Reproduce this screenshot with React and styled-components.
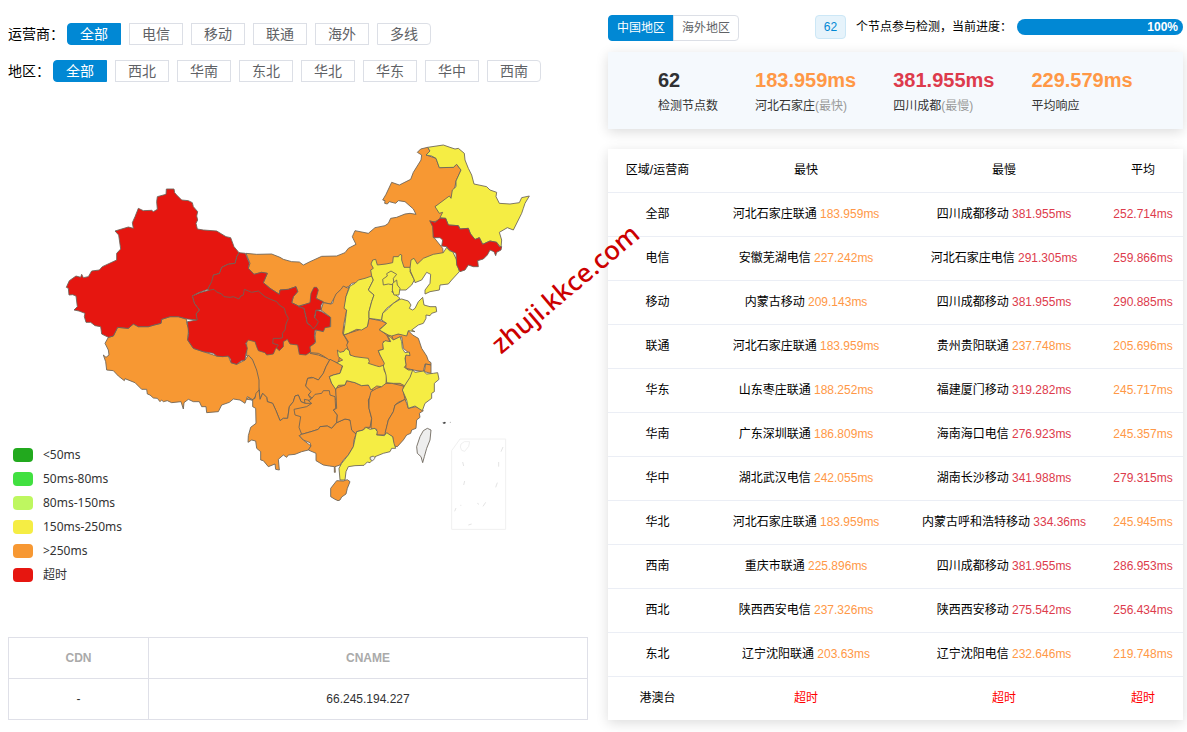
import { useState } from 'react'
import styled, { createGlobalStyle } from 'styled-components'

const RED = '#e61610'
const ORANGE = '#f79833'
const YELLOW = '#f5ed44'
const GREY = '#eeeeee'

const carriers = ['全部', '电信', '移动', '联通', '海外', '多线']
const areas = ['全部', '西北', '华南', '东北', '华北', '华东', '华中', '西南']

const legend = [
	{ color: '#22a91e', text: '<50ms' },
	{ color: '#41e040', text: '50ms-80ms' },
	{ color: '#bef760', text: '80ms-150ms' },
	{ color: YELLOW, text: '150ms-250ms' },
	{ color: ORANGE, text: '>250ms' },
	{ color: RED, text: '超时' },
]

const summary = [
	{ value: '62', name: '检测节点数' },
	{ value: '183.959ms', name: '河北石家庄', note: '(最快)', level: 'warn' },
	{ value: '381.955ms', name: '四川成都', note: '(最慢)', level: 'slow' },
	{ value: '229.579ms', name: '平均响应', level: 'warn' },
]

const results = [
	['全部', '河北石家庄联通', 183.959, '四川成都移动', 381.955, 252.714],
	['电信', '安徽芜湖电信', 227.242, '河北石家庄电信', 291.305, 259.866],
	['移动', '内蒙古移动', 209.143, '四川成都移动', 381.955, 290.885],
	['联通', '河北石家庄联通', 183.959, '贵州贵阳联通', 237.748, 205.696],
	['华东', '山东枣庄联通', 188.252, '福建厦门移动', 319.282, 245.717],
	['华南', '广东深圳联通', 186.809, '海南海口电信', 276.923, 245.357],
	['华中', '湖北武汉电信', 242.055, '湖南长沙移动', 341.988, 279.315],
	['华北', '河北石家庄联通', 183.959, '内蒙古呼和浩特移动', 334.36, 245.945],
	['西南', '重庆市联通', 225.896, '四川成都移动', 381.955, 286.953],
	['西北', '陕西西安电信', 237.326, '陕西西安移动', 275.542, 256.434],
	['东北', '辽宁沈阳联通', 203.63, '辽宁沈阳电信', 232.646, 219.748],
	['港澳台', '', null, '', null, null],
]

// Each sheet has its own origin, provinces later in a sheet lie over earlier ones
const sheets = [
	{
		at: [0, 0],
		shapes: [
			['内蒙古', ORANGE, '738,760 770,763 815,762 840,772 850,778 875,785 898,786 910,795 930,785 965,769 1010,768 1035,758 1045,745 1068,733 1059,715 1057,710 1065,692 1105,700 1125,683 1155,677 1165,670 1172,655 1190,652 1215,642 1230,640 1248,643 1240,627 1215,605 1195,602 1187,610 1168,605 1162,612 1154,610 1155,602 1148,600 1158,583 1175,547 1198,555 1232,538 1240,517 1263,480 1265,465 1252,457 1262,447 1283,442 1290,453 1278,465 1308,475 1318,503 1360,502 1370,493 1383,510 1368,543 1365,560 1353,595 1305,620 1335,635 1335,660 1300,665 1300,710 1328,745 1330,760 1240,830 1120,840 1055,850 1045,860 1023,868 1002,895 992,912 970,908 952,897 930,910 895,918 875,908 880,890 893,875 888,860 865,868 840,870 838,883 810,865 790,848 802,820 785,817 762,823 745,805 750,790'],
		],
	},
	{
		at: [720, 1020],
		shapes: [
			['四川', ORANGE, '20,48 35,55 48,90 52,120 57,150 60,178 68,160 80,172 82,185 98,190 108,212 120,242 130,235 143,235 148,200 160,185 165,168 175,165 183,185 195,190 193,178 217,183 205,165 215,155 197,138 203,115 215,112 235,120 250,100 258,80 270,58 235,45 210,40 180,0 60,-20 20,0'],
		],
	},
	{
		at: [180, 540],
		shapes: [
			['西藏', ORANGE, '145,472 160,468 173,442 205,445 220,432 235,440 265,440 303,430 305,418 330,410 355,410 380,418 380,430 386,445 383,480 400,505 430,515 470,528 505,528 513,548 530,553 555,540 565,525 578,540 590,570 597,600 597,650 585,650 580,660 562,650 555,670 540,660 520,657 508,667 485,675 475,695 440,698 438,680 425,680 418,665 400,665 385,658 372,668 370,687 363,665 335,668 322,662 310,665 305,660 300,665 292,655 280,654 270,645 262,642 260,628 245,628 225,608 210,602 195,596 193,602 175,588 160,572 140,570 137,545 130,525 138,532 147,525 145,510 135,490'],
		],
	},
	{
		at: [0, 0],
		shapes: [
			['甘肃', RED, '717,758 736,760 748,790 745,805 762,823 785,817 802,820 790,848 810,865 838,883 840,870 865,868 888,860 893,875 880,890 875,908 895,918 912,925 922,970 940,982 948,930 965,935 992,952 990,982 975,985 970,995 945,990 943,1008 946,1025 940,1035 930,1040 932,1055 918,1065 898,1063 893,1035 870,1032 862,1018 850,1025 850,1040 838,1052 825,1040 623,868 640,825 658,820 665,802 685,792 705,790 710,770'],
			['青海', RED, '577,888 600,878 630,870 642,868 650,876 665,882 672,890 690,892 700,890 717,897 722,888 730,885 733,868 755,877 775,873 795,890 812,898 830,905 838,915 853,925 857,940 865,955 858,972 855,990 847,1000 848,1013 840,1015 820,1015 818,1030 835,1035 826,1048 820,1062 800,1065 795,1058 775,1052 770,1040 765,1025 745,1020 737,1030 742,1045 738,1060 735,1080 724,1082 710,1093 693,1088 692,1078 685,1068 668,1070 650,1068 640,1060 610,1055 580,1045 563,1020 566,1000 562,965 590,960 588,942 598,930 583,910'],
		],
	},
	{
		at: [180, 540],
		shapes: [
			['新疆', RED, '319,27 342,27 344,38 350,45 365,60 385,62 397,68 400,80 413,95 410,108 413,120 408,130 412,147 430,150 470,153 498,170 512,173 522,200 537,218 530,230 525,250 505,252 485,262 478,280 460,285 455,305 443,328 415,338 397,348 403,370 418,390 408,402 412,420 382,417 355,410 330,410 305,418 303,430 285,434 265,440 235,440 220,432 205,445 173,442 160,468 145,472 125,462 122,440 105,437 92,427 78,427 73,410 75,400 57,393 42,390 52,380 48,348 38,344 27,345 25,325 19,322 28,302 48,288 62,292 65,283 70,293 85,290 95,273 118,270 127,260 170,240 170,220 182,207 176,165 165,153 205,141 220,145 217,128 225,110 235,85 250,92 275,91 280,95 292,88 290,65 292,50 318,43'],
		],
	},
	{
		at: [690, 690],
		shapes: [
			['陕西', ORANGE, '358,170 352,174 340,168 333,178 318,192 312,205 308,220 302,222 280,218 273,240 302,262 302,290 285,293 280,305 258,300 255,320 257,338 240,350 242,368 265,370 280,378 295,388 310,395 325,400 330,370 362,358 350,330 338,310 342,280 350,240 345,235 348,200'],
			['宁夏', RED, '260,172 265,180 258,205 280,215 273,225 273,240 258,240 253,262 265,275 260,285 250,297 240,285 232,280 228,260 222,235 205,230 240,218 243,190 252,172'],
		],
	},
	{
		at: [720, 1020],
		shapes: [
			['云南', ORANGE, '20,178 25,172 35,180 45,175 48,160 57,150 60,178 68,160 80,172 82,185 98,190 108,212 120,242 130,235 143,235 148,200 160,185 165,168 175,165 183,185 195,190 215,190 200,205 185,225 185,262 187,280 178,287 190,300 213,318 205,330 185,335 165,343 145,345 140,352 130,345 115,358 118,390 107,388 105,372 85,380 70,362 62,360 62,335 50,325 47,303 35,300 24,307 25,287 32,262 48,250 47,205 38,200 38,180'],
			['重庆', ORANGE, '270,58 290,68 308,75 300,100 280,105 268,110 275,130 287,145 290,178 260,175 225,180 217,175 205,165 213,155 197,138 203,115 220,113 235,120 250,100 258,80'],
			['贵州', ORANGE, '162,208 200,200 215,190 205,182 213,178 225,163 245,160 250,152 268,152 270,165 285,170 287,205 280,210 292,225 290,248 275,265 262,258 240,260 235,268 213,275 185,283 177,262 182,230 165,225'],
			['广西', ORANGE, '185,283 213,275 235,268 240,260 262,258 275,265 290,248 315,237 330,240 335,250 335,270 348,282 342,300 340,320 325,345 312,358 300,375 285,380 286,397 283,397 283,380 268,378 250,375 228,362 228,340 205,330 213,318 210,308 190,300 178,287'],
			['湖南', ORANGE, '287,145 315,135 320,122 345,128 365,137 385,135 398,150 398,155 385,180 387,205 395,235 390,262 375,262 370,270 350,275 348,282 335,270 330,240 315,237 290,248 292,225 280,210 290,205'],
			['江西', ORANGE, '393,155 410,145 425,140 430,130 455,130 490,138 490,155 495,178 475,187 465,195 460,215 445,240 435,285 410,285 410,268 393,265 395,235 387,205 387,180'],
			['福建', ORANGE, '495,178 500,190 505,205 528,200 550,212 538,220 540,232 530,240 528,265 515,270 512,280 500,285 490,300 472,320 460,318 458,290 435,280 445,240 460,215 465,195'],
			['广东', YELLOW, '378,262 390,268 405,265 412,275 410,285 433,287 440,278 458,290 462,310 467,325 455,325 450,335 430,340 405,350 397,360 390,368 382,366 372,376 345,377 325,380 318,395 315,420 300,420 297,385 305,370 325,345 340,320 348,282 350,275 370,270'],
			['香港', GREY, '390,352 400,348 406,354 398,362 391,359'],
			['海南', ORANGE, '290,422 310,423 322,419 330,425 322,445 318,462 305,471 300,480 294,482 285,478 272,470 272,445'],
			['台湾', GREY, '562,265 573,270 570,300 560,325 553,350 548,368 543,350 532,340 530,320 540,290 550,272'],
		],
	},
	{
		at: [990, 720],
		shapes: [
			['河南', ORANGE, '42,285 55,280 80,272 112,260 117,235 155,243 170,250 148,268 170,285 180,305 160,305 160,328 145,332 150,345 167,370 165,390 140,390 115,370 90,365 60,345 50,315 55,305'],
		],
	},
	{
		at: [720, 1020],
		shapes: [
			['湖北', YELLOW, '292,30 300,37 312,34 318,25 328,32 330,45 345,50 360,52 385,55 388,65 385,70 410,78 418,80 433,75 432,90 440,105 438,130 425,140 410,138 393,150 385,135 365,137 345,128 320,122 315,135 295,136 287,148 275,130 268,110 280,105 300,100 308,78 290,68 308,60 295,50'],
		],
	},
	{
		at: [990, 720],
		shapes: [
			['山西', YELLOW, '60,138 75,130 85,120 105,115 125,108 130,120 115,150 132,165 125,185 117,215 117,235 112,260 95,270 80,268 55,280 40,285 45,250 50,210 42,205 48,170'],
			['江苏', ORANGE, '183,280 205,282 230,285 235,272 248,285 265,295 275,325 290,348 295,362 303,368 303,375 285,372 280,395 250,390 228,385 225,345 240,342 220,325 215,290 190,300'],
			['上海', ORANGE, '287,372 303,375 303,400 283,395'],
			['安徽', YELLOW, '173,285 180,290 190,300 210,290 215,305 217,325 225,338 238,336 240,347 228,345 225,355 228,375 223,382 235,390 250,390 240,415 225,438 210,430 190,430 170,428 168,405 160,378 163,370 150,345 145,332 160,328 158,310 165,302 182,305'],
			['河北', YELLOW, '137,58 142,75 168,72 188,68 190,50 205,50 210,43 215,45 215,60 222,82 242,82 240,95 253,120 245,135 228,150 210,150 185,155 210,175 190,190 170,205 158,220 155,240 117,235 117,215 125,185 132,165 115,150 130,120 125,108 122,90 130,85 123,72 128,60'],
			['北京', YELLOW, '183,93 200,103 190,115 192,135 175,132 160,135 158,118 172,108 170,101'],
			['天津', YELLOW, '200,120 202,135 210,145 207,165 192,165 187,150 188,130'],
			['山东', YELLOW, '215,177 235,183 243,195 238,205 248,210 255,205 265,185 278,172 282,195 300,200 318,200 320,215 305,220 300,227 288,225 288,235 280,250 265,255 245,270 255,275 235,272 230,288 205,282 185,288 175,285 148,270 170,250 155,240 158,220 175,205 190,190 210,178'],
			['辽宁', YELLOW, '242,95 240,85 243,60 252,55 262,72 280,55 310,43 340,38 350,22 358,32 368,35 380,60 388,95 365,120 355,132 330,135 328,150 300,155 285,162 285,150 300,130 302,103 290,97 275,120 255,128 253,120'],
		],
	},
	{
		at: [720, 1020],
		shapes: [
			['浙江', YELLOW, '518,90 525,97 550,93 560,102 580,100 593,98 597,118 583,130 583,155 575,160 575,175 555,190 547,212 540,208 525,198 505,205 500,180 487,150 495,135 510,112'],
		],
	},
	{
		at: [1050, 405],
		shapes: [
			['黑龙江', YELLOW, '233,37 280,30 300,37 315,42 325,40 343,55 345,75 355,100 365,120 372,147 410,155 420,165 440,172 438,185 448,205 480,207 508,203 515,188 538,183 525,205 520,220 515,235 505,255 490,285 472,278 448,292 455,315 453,338 440,322 420,318 398,328 388,308 375,315 360,295 355,280 330,282 325,272 295,270 287,250 270,248 278,232 268,235 255,215 298,183 303,190 307,165 318,155 318,138 333,105 320,88 310,97 268,98 258,70 245,63 228,60 240,48'],
			['吉林', RED, '239,257 255,262 270,250 287,250 295,270 325,272 330,282 355,280 362,297 375,313 388,308 398,328 420,318 440,322 448,335 455,335 453,345 440,352 437,362 432,350 420,345 412,360 400,372 383,377 385,395 370,395 355,390 345,405 330,410 320,390 318,355 298,345 290,335 275,333 278,315 270,308 250,308 248,275'],
		],
	},
]

const seaMarks = 'M1503,725 l6,-14 M1388,756 m0,0 l3,12 M1496,756 v14 M1391,825 l3,-12 M1487,832 l5,-14 M1364,904 l4,-10 M1381,886 h3 M1432,880 l5,3 M1449,889 l8,-12 M1405,945 l10,-3'

const Global = createGlobalStyle`
	* {
		box-sizing: border-box;
	}

	body {
		margin: 0;
		background: #fff;
		color: #000;
		font: 12px/20px "Liberation Sans", Arial, "Noto Sans CJK SC", sans-serif;
	}

	button {
		font-family: inherit;
		cursor: pointer;
	}
`

const App = () => {
	const [carrier, setCarrier] = useState('全部')
	const [area, setArea] = useState('全部')
	const [scope, setScope] = useState('中国地区')

	return (
		<Page>
			<Global />
			<MapColumn>
				<Filter label="运营商：" id="carrier" items={carriers} value={carrier} onPick={setCarrier} />
				<Filter label="地区：" id="area" items={areas} value={area} onPick={setArea} />
				<MapPanel>
					<ChinaMap />
					<Legend>
						{legend.map(item => (
							<LegendItem key={item.text}>
								<Swatch $color={item.color} />
								{item.text}
							</LegendItem>
						))}
					</Legend>
				</MapPanel>
				<CdnTable>
					<thead>
						<tr>
							<th>CDN</th>
							<th>CNAME</th>
						</tr>
					</thead>
					<tbody>
						<tr>
							<td>-</td>
							<td>66.245.194.227</td>
						</tr>
					</tbody>
				</CdnTable>
			</MapColumn>

			<ResultColumn>
				<TopBar>
					<Tabs>
						{['中国地区', '海外地区'].map(name => (
							<Tab key={name} $active={scope === name} onClick={() => setScope(name)}>{name}</Tab>
						))}
					</Tabs>
					<Count>62</Count>
					<ProgressText>个节点参与检测，当前进度：</ProgressText>
					<Progress role="progressbar" aria-valuenow={100}>
						<Bar style={{ width: '100%' }}>100%</Bar>
					</Progress>
				</TopBar>
				<Summary>
					{summary.map(item => (
						<div key={item.name}>
							<Figure $level={item.level}>{item.value}</Figure>
							<Caption>{item.name}{item.note && <Note>{item.note}</Note>}</Caption>
						</div>
					))}
				</Summary>
				<ResultTable>
					<colgroup>
						<Col $w={99} />
						<Col $w={198} />
						<Col $w={198} />
						<Col $w={80} />
					</colgroup>
					<thead>
						<tr>
							<th>区域/运营商</th>
							<th>最快</th>
							<th>最慢</th>
							<th>平均</th>
						</tr>
					</thead>
					<tbody>
						{results.map(([name, fastNode, fast, slowNode, slow, avg]) => (
							<tr key={name}>
								<td>{name}</td>
								<td>{fastNode} <Delay ms={fast} /></td>
								<td>{slowNode} <Delay ms={slow} /></td>
								<td><Delay ms={avg} /></td>
							</tr>
						))}
					</tbody>
				</ResultTable>
			</ResultColumn>
			<Watermark>zhuji.kkce.com</Watermark>
		</Page>
	)
}

export default App

function Filter({ label, id, items, value, onPick }) {
	return (
		<FilterRow role="group" aria-labelledby={id}>
			<FilterLabel id={id}>{label}</FilterLabel>
			<Options>
				{items.map(item => (
					<Option key={item} $active={item === value} aria-pressed={item === value} onClick={() => onPick(item)}>
						{item}
					</Option>
				))}
			</Options>
		</FilterRow>
	)
}

function Delay({ ms }) {
	if (ms === null) return <Timeout>超时</Timeout>
	return <Time $slow={ms > 250}>{ms}ms</Time>
}

function ChinaMap() {
	return (
		<MapSvg viewBox="24 270 1740 1350" role="img" aria-label="中国地图">
			{/* keeps the seams between the central provinces from showing white */}
			<polygon
				fill={ORANGE}
				points="930,1050 1030,980 1120,960 1180,1010 1230,1090 1230,1180 1190,1250 1100,1290 1000,1300 900,1260 780,1240 780,1050"
			/>
			{sheets.map((sheet, i) => (
				<g key={i} transform={`translate(${sheet.at.join(' ')})`} stroke="#6b6459" strokeWidth="2.6" strokeLinejoin="round">
					{sheet.shapes.map(([name, fill, points]) => (
						<polygon key={name} fill={fill} points={points} />
					))}
				</g>
			))}
			<path d="M1327,1268 l8,-3 l3,4 l-6,3 z" fill="#444" />
			<circle cx="1351" cy="1267" r="1.5" fill="#999" />
			<g fill="none" stroke="#f0f0f0" strokeWidth="3">
				<path d="M1355,1352 L1380,1317 H1517 V1588 H1355 Z" />
				<path d="M1383,1332 l10,-7 h16 l-3,14 l-12,15 l-9,-3 l-4,-10 z" />
				<path d={seaMarks} stroke="#e4e4e4" transform="translate(0 630)" />
			</g>
		</MapSvg>
	)
}

const Page = styled.div`
	position: relative;
	display: grid;
	grid-template-columns: 580fr 575fr;
	gap: 20px;
	padding: 0 4px 12px 8px;
`
const MapColumn = styled.section`
	padding-top: 23px;
`
const FilterRow = styled.div`
	display: flex;
	align-items: center;
	height: 22px;
	margin-bottom: 15px;
`
const FilterLabel = styled.span`
	margin-right: 3px;
	font-size: 14px;
`
const Options = styled.div`
	display: flex;
	gap: 8px;
`
const Option = styled.button`
	width: 54px;
	height: 22px;
	padding: 0;
	border: 1px solid ${p => (p.$active ? '#0188d4' : '#dcdfe6')};
	background: ${p => (p.$active ? '#0188d4' : '#fff')};
	color: ${p => (p.$active ? '#fff' : '#606266')};
	font-size: 14px;
	line-height: 20px;

	&:first-child {
		border-radius: 4px 0 0 4px;
	}

	&:last-child {
		border-radius: 0 4px 4px 0;
	}
`
const MapPanel = styled.div`
	position: relative;
	margin-top: -7px;
	padding-bottom: 97px;
`
const MapSvg = styled.svg`
	display: block;
	width: 100%;
`
const Legend = styled.ul`
	position: absolute;
	left: 5px;
	bottom: 50px;
	margin: 0;
	padding: 0;
	list-style: none;
`
const LegendItem = styled.li`
	display: flex;
	align-items: center;
	gap: 10px;
	height: 24px;
	color: #333;
	font-family: "Noto Sans", "Open Sans", "Noto Sans CJK SC", sans-serif;
`
const Swatch = styled.span`
	width: 20px;
	height: 14px;
	border-radius: 4px;
	background: ${p => p.$color};
`
const CdnTable = styled.table`
	width: 100%;
	border-collapse: collapse;
	table-layout: fixed;
	text-align: center;

	th,
	td {
		height: 41px;
		padding: 0;
		border: 1px solid #dfe0e8;
		color: #303133;
	}

	th {
		color: #aaa;
	}

	th:first-child {
		width: 140px;
	}
`
const ResultColumn = styled.section`
	padding-top: 15px;
`
const TopBar = styled.div`
	display: flex;
	height: 26px;
	margin-bottom: 11px;
`
const Tabs = styled.div`
	display: flex;
	margin-right: 76px;
`
const Tab = styled.button`
	height: 26px;
	padding: 0 8px;
	border: 1px solid ${p => (p.$active ? '#0188d4' : '#dcdfe6')};
	border-radius: 0 4px 4px 0;
	background: ${p => (p.$active ? '#0188d4' : '#fff')};
	color: ${p => (p.$active ? '#fff' : '#606266')};
	font-size: 12px;
	line-height: 22px;

	&:first-child {
		border-radius: 4px 0 0 4px;
	}

	& + & {
		margin-left: -1px;
	}
`
const Count = styled.span`
	width: 31px;
	height: 24px;
	margin-right: 10px;
	border: 1px solid #cce7f6;
	border-radius: 4px;
	background: #e6f3fb;
	color: #0188d4;
	line-height: 22px;
	text-align: center;
`
const ProgressText = styled.span`
	margin-right: 5px;
	line-height: 24px;
	white-space: nowrap;
`
const Progress = styled.div`
	flex: 1;
	height: 16px;
	margin-top: 4px;
	border-radius: 8px;
	background: #ebeef5;
`
const Bar = styled.div`
	height: 16px;
	padding-right: 5px;
	border-radius: 8px;
	background: #0188d4;
	color: #fff;
	font-weight: bold;
	line-height: 17px;
	text-align: right;
`
const Summary = styled.div`
	display: flex;
	gap: 37px;
	padding: 16px 0 9px 50px;
	margin-bottom: 20px;
	background: #f5f9fd;
	box-shadow: 0 3px 12px rgba(0, 0, 0, 0.14);
`
const levels = { warn: '#ff9846', slow: '#dd3b4c' }

const Figure = styled.div`
	color: ${p => levels[p.$level] || '#303133'};
	font-size: 20px;
	font-weight: bold;
	line-height: 24px;
`
const Caption = styled.div`
	color: #333;
	line-height: 28px;
`
const Note = styled.span`
	color: #999;
`
const ResultTable = styled.table`
	width: 100%;
	border-collapse: collapse;
	table-layout: fixed;
	text-align: center;
	box-shadow: 0 3px 12px rgba(0, 0, 0, 0.14);

	th,
	td {
		height: 44px;
		padding: 0 0 1px;
		font-weight: normal;
		white-space: nowrap;
	}

	th {
		height: 43px;
	}

	tbody tr {
		border-top: 1px solid #ebeef5;
	}
`
const Col = styled.col`
	width: ${p => p.$w}px;
`
const Time = styled.span`
	color: ${p => (p.$slow ? levels.slow : levels.warn)};
`
const Timeout = styled.span`
	color: #f00;
`
const Watermark = styled.div`
	position: absolute;
	left: 503px;
	top: 331px;
	color: #c00;
	font: 500 26px/26px "Noto Sans", "Open Sans", sans-serif;
	transform: rotate(-40deg);
	transform-origin: left bottom;
	pointer-events: none;
`
